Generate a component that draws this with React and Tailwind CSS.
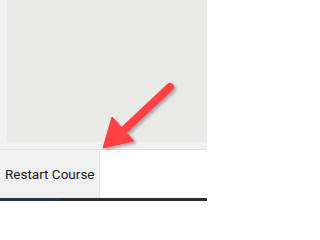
export default function App() {
  return (
    <div className="relative flex h-[201px] w-[207px] flex-col overflow-hidden bg-[#f1f1f1] font-['Roboto',sans-serif]">
      <div className="h-[149px] shrink-0 pl-[7px] pb-[7px]">
        <div className="h-full w-full bg-[#e9e9e7]" />
      </div>
      <div className="flex flex-1 border-t border-[#e2e2e2]">
        <div className="flex w-[99px] items-center bg-[#f0f0f0] pl-[5px] text-[13.5px] text-[#1a1a24]">
          Restart Course
        </div>
        <div className="flex-1 border-l border-[#e6e6e6] bg-white" />
      </div>
      <div className="flex h-[3px] shrink-0">
        <div className="w-[60px] bg-[#1d3840]" />
        <div className="flex-1 bg-[#2b2b2b]" />
      </div>
      <svg
        className="pointer-events-none absolute left-0 top-0"
        width="207"
        height="201"
        viewBox="0 0 207 201"
      >
        <defs>
          <filter id="sh" x="-20%" y="-20%" width="140%" height="140%">
            <feDropShadow dx="2" dy="2" stdDeviation="1.5" floodColor="#000" floodOpacity="0.3" />
          </filter>
        </defs>
        <g filter="url(#sh)" fill="#ff3f45" stroke="#ff3f45">
          <line x1="170" y1="87" x2="122" y2="132" strokeWidth="8" strokeLinecap="round" />
          <polygon points="103,148 112,117 134,141" strokeWidth="1" strokeLinejoin="round" />
        </g>
      </svg>
    </div>
  );
}
